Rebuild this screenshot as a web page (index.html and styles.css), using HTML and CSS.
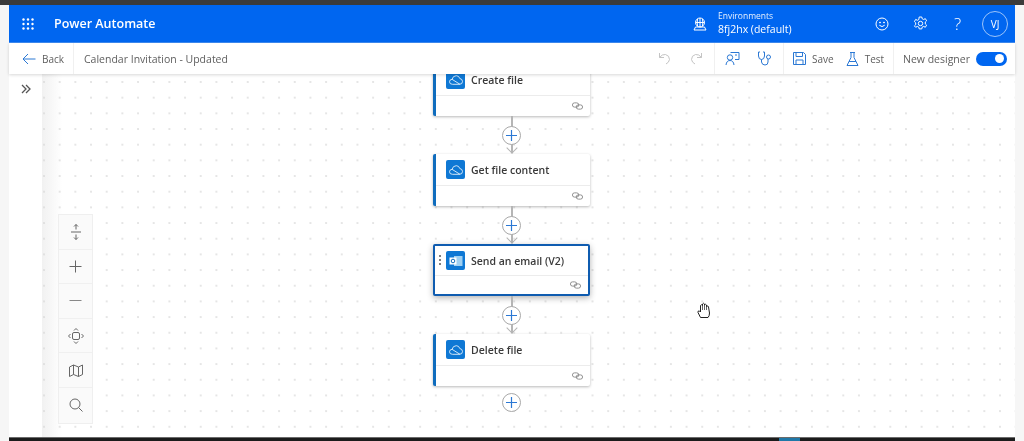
FILE: index.html
```html
<!DOCTYPE html>
<html lang="en">
<head>
<meta charset="utf-8">
<title>Power Automate</title>
<link rel="stylesheet" href="styles.css">
</head>
<body>
<div class="page">
  <div class="topstrip"></div>
  <div class="frame">
    <div class="app">
      <header class="header">
        <svg class="waffle" width="12" height="12" viewBox="0 0 12 12" fill="#fff"><circle cx="1.5" cy="1.5" r="1.2"/><circle cx="6" cy="1.5" r="1.2"/><circle cx="10.5" cy="1.5" r="1.2"/><circle cx="1.5" cy="6" r="1.2"/><circle cx="6" cy="6" r="1.2"/><circle cx="10.5" cy="6" r="1.2"/><circle cx="1.5" cy="10.5" r="1.2"/><circle cx="6" cy="10.5" r="1.2"/><circle cx="10.5" cy="10.5" r="1.2"/></svg>
        <span class="brand">Power Automate</span>
        <svg class="env-icon" width="14" height="14" viewBox="0 0 14 14" fill="none" stroke="#fff" stroke-width="1"><circle cx="7" cy="5.5" r="4.5"/><path d="M2.5 5.5h9M7 1v9M4.5 2Q3.8 5.5 4.5 9M9.5 2Q10.2 5.5 9.5 9M1 13h12l-1.5-3h-9z"/></svg>
        <div class="env">
          <span class="env-label">Environments</span>
          <span class="env-name">8fj2hx (default)</span>
        </div>
        <svg class="h-smile" width="14" height="14" viewBox="0 0 14 14" fill="none" stroke="#fff" stroke-width="1"><circle cx="7" cy="7" r="6"/><path d="M4.3 8.2Q7 11 9.700 8.200"/><circle cx="5" cy="5.500" r=".5" fill="#fff"/><circle cx="9" cy="5.500" r=".5" fill="#fff"/></svg>
        <svg class="h-gear" width="15" height="15" viewBox="0 0 15 15" fill="none" stroke="#fff" stroke-width="1"><circle cx="7.500" cy="7.500" r="2.200"/><path d="M6.200 1h2.600l.4 1.800 1.500.7 1.600-.9 1.300 2.200-1.300 1.200v1.900l1.300 1.200-1.300 2.200-1.600-.9-1.500.7-.4 1.800H6.200l-.4-1.800-1.500-.7-1.600.9L1.400 9.900l1.300-1.200V6.800L1.400 5.600l1.300-2.200 1.600.9 1.500-.7z"/></svg>
        <span class="h-help">?</span>
        <span class="avatar">VJ</span>
      </header>
      <nav class="toolbar">
        <div class="tb-back">
          <svg width="14" height="12" viewBox="0 0 14 12" fill="none" stroke="#2b78d4" stroke-width="1"><path d="M13.500 6H1M6 1 1 6l5 5"/></svg>
          <span class="tb-label">Back</span>
        </div>
        <div class="tb-title">Calendar Invitation - Updated</div>
        <div class="tb-history">
          <svg width="13" height="13" viewBox="0 0 13 13" fill="none" stroke="#c4c4c4" stroke-width="1"><path d="M1.500 1v4.500H6M1.500 5.500Q4 2 7.500 2.500 11.500 3.500 11.500 7.500 11 10.500 8 12"/></svg>
          <svg width="13" height="13" viewBox="0 0 13 13" fill="none" stroke="#c4c4c4" stroke-width="1"><path d="M11.500 1v4.500H7M11.500 5.500Q9 2 5.500 2.500 1.500 3.500 1.500 7.500 2 10.500 5 12"/></svg>
        </div>
        <div class="tb-tools">
          <svg width="15" height="15" viewBox="0 0 15 15" fill="none" stroke="#2b78d4" stroke-width="1"><path d="M5.500 1.500H14v7H10"/><circle cx="5" cy="6.500" r="2.700"/><path d="M1 14q.5-4.500 4-4.500T9 14M10 4h2"/></svg>
          <svg width="15" height="15" viewBox="0 0 15 15" fill="none" stroke="#2b78d4" stroke-width="1"><path d="M3 1H1.500v4Q1.700 8.500 4.500 8.500T7.500 5V1H6M4.500 8.500V11Q5 14 8 14T11 11V8"/><circle cx="11.500" cy="6" r="2"/></svg>
        </div>
        <div class="tb-actions">
          <svg width="13" height="13" viewBox="0 0 13 13" fill="none" stroke="#2b78d4" stroke-width="1"><path d="M.5.500h10l2 2v10H.5zM3 .5v4h6.500v-4M3 12.500V8h7v4.500"/></svg>
          <span class="tb-label">Save</span>
          <svg class="flask" width="13" height="14" viewBox="0 0 13 14" fill="none" stroke="#2b78d4" stroke-width="1"><path d="M4 .5h5M5 .5v5L1 13.500h11L8 5.500v-5M3 9.500h7"/></svg>
          <span class="tb-label">Test</span>
        </div>
        <div class="tb-designer">
          <span>New designer</span>
          <span class="toggle"><span class="knob"></span></span>
        </div>
      </nav>
      <main class="workspace">
        <aside class="rail">
          <svg width="10" height="10" viewBox="0 0 10 10" fill="none" stroke="#555" stroke-width="1.300"><path d="M1 1l4 4-4 4M5 1l4 4-4 4"/></svg>
        </aside>
        <section class="canvas">
          <div class="flow">
            <article class="card">
              <div class="card-head"><span class="conn"><svg width="14" height="10" viewBox="0 0 14 10" fill="none" stroke="#fff" stroke-width=".8"><path d="M3.500 9.300Q.5 9.300.5 6.800.5 4.500 3 4.300 4 .7 7.300.7 10 .7 10.800 3.500 13.500 4 13.500 6.500 13.500 9.300 10.500 9.300zM3 4.300l8 5"/></svg></span><h3>Create file</h3></div>
              <div class="card-foot"><svg class="link" width="11" height="8" viewBox="0 0 13 9" fill="none" stroke="#8a8a8a" stroke-width="1.100"><rect x=".5" y=".8" width="7.500" height="5" rx="2.500"/><rect x="5" y="3.200" width="7.500" height="5" rx="2.500"/></svg></div>
            </article>
            <div class="link-line"><span class="plus"><svg width="11" height="11" viewBox="0 0 11 11" stroke="#2b78d4" stroke-width="1.200"><path d="M5.500 0v11M0 5.500h11"/></svg></span></div>
            <article class="card">
              <div class="card-head"><span class="conn"><svg width="14" height="10" viewBox="0 0 14 10" fill="none" stroke="#fff" stroke-width=".8"><path d="M3.500 9.300Q.5 9.300.5 6.800.5 4.500 3 4.300 4 .7 7.300.7 10 .7 10.800 3.500 13.500 4 13.500 6.500 13.500 9.300 10.500 9.300zM3 4.300l8 5"/></svg></span><h3>Get file content</h3></div>
              <div class="card-foot"><svg class="link" width="11" height="8" viewBox="0 0 13 9" fill="none" stroke="#8a8a8a" stroke-width="1.100"><rect x=".5" y=".8" width="7.500" height="5" rx="2.500"/><rect x="5" y="3.200" width="7.500" height="5" rx="2.500"/></svg></div>
            </article>
            <div class="link-line"><span class="plus"><svg width="11" height="11" viewBox="0 0 11 11" stroke="#2b78d4" stroke-width="1.200"><path d="M5.500 0v11M0 5.500h11"/></svg></span></div>
            <article class="card selected">
              <span class="grip"><i></i><i></i><i></i></span>
              <div class="card-head"><span class="conn"><svg width="14" height="12" viewBox="0 0 14 12"><rect x="5" y="1" width="8.500" height="10" fill="#9fd0f2"/><rect x=".5" y="2.500" width="7" height="7" fill="#fff"/><circle cx="4" cy="6" r="1.800" fill="none" stroke="#0f6cbd" stroke-width="1"/></svg></span><h3>Send an email (V2)</h3></div>
              <div class="card-foot"><svg class="link" width="11" height="8" viewBox="0 0 13 9" fill="none" stroke="#8a8a8a" stroke-width="1.100"><rect x=".5" y=".8" width="7.500" height="5" rx="2.500"/><rect x="5" y="3.200" width="7.500" height="5" rx="2.500"/></svg></div>
            </article>
            <div class="link-line"><span class="plus"><svg width="11" height="11" viewBox="0 0 11 11" stroke="#2b78d4" stroke-width="1.200"><path d="M5.500 0v11M0 5.500h11"/></svg></span></div>
            <article class="card">
              <div class="card-head"><span class="conn"><svg width="14" height="10" viewBox="0 0 14 10" fill="none" stroke="#fff" stroke-width=".8"><path d="M3.500 9.300Q.5 9.300.5 6.800.5 4.500 3 4.300 4 .7 7.300.7 10 .7 10.800 3.500 13.500 4 13.500 6.500 13.500 9.300 10.500 9.300zM3 4.300l8 5"/></svg></span><h3>Delete file</h3></div>
              <div class="card-foot"><svg class="link" width="11" height="8" viewBox="0 0 13 9" fill="none" stroke="#8a8a8a" stroke-width="1.100"><rect x=".5" y=".8" width="7.500" height="5" rx="2.500"/><rect x="5" y="3.200" width="7.500" height="5" rx="2.500"/></svg></div>
            </article>
            <span class="plus last"><svg width="11" height="11" viewBox="0 0 11 11" stroke="#2b78d4" stroke-width="1.200"><path d="M5.500 0v11M0 5.500h11"/></svg></span>
          </div>
          <div class="zoombar">
            <button><svg width="12" height="16" viewBox="0 0 12 16" fill="none" stroke="#666" stroke-width="1"><path d="M1 8h10M6 .5v5M6 10.500v5M4 2.500 6 .5l2 2M4 13.500l2 2 2-2"/></svg></button>
            <button><svg width="13" height="13" viewBox="0 0 13 13" stroke="#666" stroke-width="1"><path d="M6.500.5v12M.5 6.500h12"/></svg></button>
            <button><svg width="13" height="3" viewBox="0 0 13 3" stroke="#888" stroke-width="1"><path d="M.5 1.500h12"/></svg></button>
            <button><svg width="16" height="16" viewBox="0 0 16 16" fill="none" stroke="#666" stroke-width="1"><rect x="4.500" y="4.500" width="7" height="7" rx="1.500"/><path d="M6 2.500l2-2 2 2M6 13.500l2 2 2-2M2.500 6l-2 2 2 2M13.500 6l2 2-2 2"/></svg></button>
            <button><svg width="14" height="13" viewBox="0 0 14 13" fill="none" stroke="#666" stroke-width="1"><path d="M.5 3 4.500 1l5 2 4-2v9.500l-4 2-5-2-4 2zM4.500 1v9.500M9.500 3v9.500"/></svg></button>
            <button><svg width="14" height="14" viewBox="0 0 14 14" fill="none" stroke="#666" stroke-width="1"><circle cx="6" cy="6" r="5"/><path d="M9.600 9.600 13.500 13.500"/></svg></button>
          </div>
          <svg class="hand" width="14" height="17" viewBox="0 0 14 17" fill="#fff" stroke="#222" stroke-width="1"><path d="M3.500 15.500 1 10.500Q.5 8.500 2.500 9L3.500 10V3.500Q4.500 2 5.500 3.500V2Q6.500.5 7.500 2V3Q8.500 1.500 9.500 3V4.500Q11 3 11.500 5L12.500 11Q12.500 14 11 15.500Z"/><path d="M5.500 3v5M7.500 3v5M9.500 4v4" stroke-width=".7"/></svg>
        </section>
      </main>
    </div>
  </div>
  <footer class="taskbar"><span class="task-active"></span></footer>
</div>
</body>
</html>
```
FILE: styles.css
```css
* { box-sizing: border-box; }
html, body { margin: 0; height: 100%; }
body { overflow: hidden; background: #f6f6f6; font-family: "Open Sans", "Noto Sans", "Liberation Sans", sans-serif; color: #444; }
svg { display: block; flex: none; }
.page { width: 1024px; height: 441px; display: flex; flex-direction: column; filter: blur(.45px); }
.topstrip { height: 5px; background: #3b3b3b; flex: none; }
.frame { flex: 1; min-height: 0; display: flex; padding: 0 9px; }
.app { flex: 1; min-width: 0; display: flex; flex-direction: column; background: #fff; }

.header { height: 38px; flex: none; display: flex; align-items: center; background: #0066f0; color: #fff; border-bottom: 1px solid #3e8bf3; padding-left: 13px; }
.waffle { margin-right: 20px; }
.brand { font-size: 12.500px; font-weight: 600; width: 639px; }
.env-icon { margin-right: 11px; }
.env { display: flex; flex-direction: column; width: 157px; }
.env-label { font-size: 8.500px; line-height: 12px; opacity: .9; }
.env-name { font-size: 10.500px; line-height: 15px; }
.h-smile { margin-right: 24px; }
.h-gear { margin-right: 26px; }
.h-help { font-size: 17px; font-weight: 300; width: 28px; }
.avatar { width: 26px; height: 26px; border: 1px solid #9cc4fa; border-radius: 50%; font-size: 10px; display: flex; align-items: center; justify-content: center; }

.toolbar { height: 31px; flex: none; display: flex; align-items: stretch; background: #fff; box-shadow: 0 1px 3px rgba(0,0,0,.16); font-size: 10.500px; color: #5e5e5e; position: relative; z-index: 2; }
.toolbar > div { display: flex; align-items: center; }
.tb-label { font-size: 10px; }
.tb-back { width: 65px; padding-left: 13px; gap: 6px; border-right: 1px solid #f0f0f0; }
.tb-title { width: 577px; padding-left: 10px; }
.tb-history { width: 64px; padding-left: 7px; gap: 19px; border-right: 1px solid #f0f0f0; }
.tb-tools { width: 69px; padding-left: 10px; gap: 17px; border-right: 1px solid #f0f0f0; }
.tb-actions { width: 110px; padding-left: 9px; border-right: 1px solid #f0f0f0; }
.tb-actions .tb-label { margin-left: 6px; }
.flask { margin-left: 12px; }
.tb-designer { padding-left: 9px; gap: 6px; }
.toggle { width: 31px; height: 14px; border-radius: 7px; background: #0066f0; display: flex; justify-content: flex-end; align-items: center; padding-right: 3px; }
.knob { width: 9px; height: 9px; border-radius: 50%; background: #fff; }

.workspace { flex: 1; min-height: 0; display: flex; }
.rail { width: 33px; flex: none; padding: 10px 0 0 12px; background: #fff; }
.canvas { flex: 1; position: relative; overflow: hidden; background-color: #fff; background-image: radial-gradient(circle at center, #d6d6d6 0, #d6d6d6 .5px, transparent 1px), linear-gradient(90deg, #f1f1f1, #fff 20px); background-size: 15.680px 15.680px, 100% 100%; background-position: -5.840px .160px, 0 0; }

.flow { display: flex; flex-direction: column; align-items: center; width: 157px; margin: -10px 0 0 391px; }
.card { position: relative; width: 157px; height: 52px; flex: none; background: #fff; border-left: 3px solid #0f6cbd; border-radius: 2px; box-shadow: 0 1px 3px rgba(0,0,0,.28); display: flex; flex-direction: column; }
.card.selected { border: 2px solid #0f5cb0; box-shadow: 0 2px 6px rgba(0,0,0,.3); }
.card-head { height: 32px; flex: none; display: flex; align-items: center; padding-left: 10px; border-bottom: 1px solid #ececec; }
.selected .card-head { padding-left: 11px; height: 30px; }
.card h3 { margin: 0 0 0 6px; font-size: 10.500px; font-weight: 600; color: #3a3a3a; }
.conn { width: 19px; height: 19px; flex: none; border-radius: 2px; background: #0f78d4; display: flex; align-items: center; justify-content: center; }
.card-foot { flex: 1; display: flex; align-items: center; justify-content: flex-end; padding-right: 7px; }
.grip { position: absolute; left: 4px; top: 9px; display: flex; flex-direction: column; gap: 2px; }
.grip i { width: 2px; height: 2px; background: #555; border-radius: 50%; }

.link-line { position: relative; width: 19px; height: 38px; flex: none; display: flex; align-items: center; justify-content: center; }
.link-line::before { content: ""; position: absolute; left: 9px; top: 0; bottom: 1px; width: 1.500px; background: #b5b5b5; }
.link-line::after { content: ""; position: absolute; left: 6px; bottom: 2px; width: 7px; height: 7px; border: solid #b5b5b5; border-width: 0 1.500px 1.500px 0; transform: rotate(45deg); }
.plus { position: relative; z-index: 1; width: 19px; height: 19px; flex: none; border: 1px solid #a8a8a8; border-radius: 50%; background: #fff; display: flex; align-items: center; justify-content: center; }
.plus.last { margin-top: 7px; }

.zoombar { position: absolute; left: 16px; top: 140px; width: 35px; display: flex; flex-direction: column; background: #fafafa; border: 1px solid #efefef; }
.zoombar button { height: 34.600px; padding: 0; border: 0; border-bottom: 1px solid #f0f0f0; background: none; display: flex; align-items: center; justify-content: center; }
.zoombar button:last-child { border-bottom: 0; }
.hand { position: absolute; left: 655px; top: 228px; }

.taskbar { height: 4px; flex: none; background: #1c1c1c; border-top: 1px solid #6b6b6b; margin: 0 9px; padding-left: 770px; }
.task-active { display: block; width: 21px; height: 3px; background: #1f78a8; }
```
